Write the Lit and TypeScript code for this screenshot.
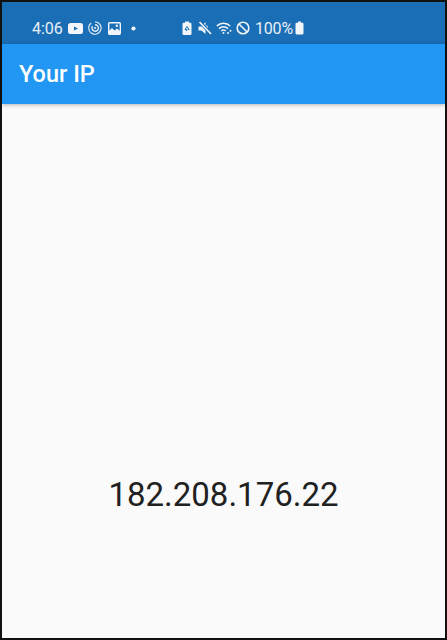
import { LitElement, html, css } from "lit";
import { customElement } from "lit/decorators.js";

@customElement("app-root")
export class AppRoot extends LitElement {
  static styles = css`
    :host {
      display: block;
      width: 447px;
      height: 640px;
      font-family: Roboto, "Liberation Sans", sans-serif;
    }
    .frame {
      box-sizing: border-box;
      width: 447px;
      height: 640px;
      border: 2px solid #111;
      background: #fafafa;
      display: flex;
      flex-direction: column;
    }
    .status {
      height: 42px;
      flex: none;
      background: #1a6eb5;
      color: #e8f0f8;
      display: flex;
      align-items: center;
      padding: 10px 0 0 30px;
      box-sizing: border-box;
      font-size: 16px;
    }
    .left, .right {
      display: flex;
      align-items: center;
    }
    .time { width: 36px; }
    svg { display: block; flex: none; }
    .right { margin-left: 46px; }
    .swirl { margin-left: 5px; }
    .image { margin-left: 6px; }
    .dot { margin-left: 10px; }
    .mute { margin-left: 6px; }
    .wifi { margin-left: 4px; }
    .block { margin-left: 4px; }
    .pct { margin-left: 5px; width: 40px; letter-spacing: -0.2px; }
    .appbar {
      height: 60px;
      flex: none;
      background: #2196f3;
      color: #fff;
      font-size: 23.5px;
      font-weight: 500;
      display: flex;
      align-items: center;
      padding: 0 0 0 17px;
      box-sizing: border-box;
      box-shadow: 0 1px 4px rgba(0, 0, 0, 0.28);
    }
    .body {
      flex: 1;
      display: flex;
      align-items: flex-end;
      justify-content: center;
      padding-bottom: 123px;
    }
    .ip {
      font-size: 33px;
      line-height: 40px;
      color: #212121;
    }
  `;

  render() {
    return html`
      <div class="frame">
        <div class="status">
          <div class="left">
            <span class="time">4:06</span>
            <svg width="15" height="11" viewBox="0 0 15 11">
              <rect width="15" height="11" rx="2.500" fill="#f2f6fa"/>
              <path d="M6 3.500v4L10 5.500z" fill="#1a6eb5"/>
            </svg>
            <svg class="swirl" width="14" height="14" viewBox="0 0 14 14" fill="none" stroke="#e8f0f8">
              <path d="M3.200 2A6.200 6.200 0 1 0 7 .8" stroke-width="1.100"/>
              <path d="M4.500 5.200A3.200 3.200 0 1 0 7 3.800" stroke-width="1.400"/>
              <circle cx="7" cy="7" r="1" fill="#e8f0f8" stroke="none"/>
            </svg>
            <svg class="image" width="13" height="13" viewBox="0 0 13 13">
              <rect x="0.700" y="0.700" width="11.600" height="11.600" rx="1" fill="none" stroke="#f2f6fa" stroke-width="1.400"/>
              <path d="M1 11.500V9l3-3 2.500 2.500L9 6.500l3 2.500v3H1z" fill="#f2f6fa"/>
              <circle cx="8.800" cy="3.800" r="1.200" fill="#f2f6fa"/>
            </svg>
            <svg class="dot" width="5" height="5" viewBox="0 0 5 5">
              <circle cx="2.500" cy="2.500" r="2.100" fill="#f2f6fa"/>
            </svg>
          </div>
          <div class="right">
            <svg width="10" height="14" viewBox="0 0 10 14">
              <path d="M3 0.500h4v1.300h1.200q1.300 0 1.300 1.300v9.600q0 1.300-1.300 1.300H1.800q-1.300 0-1.300-1.300V3.100q0-1.300 1.300-1.300H3z" fill="#f2f6fa"/>
              <path d="M5 5.500 3 8.500h1.500v1.500M5 5.500 7 8.500H5.500" fill="none" stroke="#1a6eb5" stroke-width="1"/>
            </svg>
            <svg class="mute" width="14" height="14" viewBox="0 0 14 14">
              <path d="M0.500 5.500h3L7.500 1v12L3.500 9.500h-3z" fill="#f2f6fa"/>
              <path d="M8.500 4.500q2 2.500 0 5" fill="none" stroke="#f2f6fa" stroke-width="1.200"/>
              <path d="M1.800 1l11.500 12" stroke="#1a6eb5" stroke-width="3.400"/>
              <path d="M1.500 1l11.500 12" stroke="#f2f6fa" stroke-width="1.700"/>
            </svg>
            <svg class="wifi" width="16" height="14" viewBox="0 0 16 14" fill="none" stroke="#f2f6fa" stroke-width="1.500">
              <path d="M0.800 5a9.500 9.500 0 0 1 13.400 0"/>
              <path d="M3 7.600a6.500 6.500 0 0 1 9 0"/>
              <path d="M5.300 10a3.300 3.300 0 0 1 4.400 0"/>
              <circle cx="7.500" cy="12" r="1" fill="#f2f6fa" stroke="none"/>
              <circle cx="14.500" cy="9.800" r="1" fill="#f2f6fa" stroke="none"/>
              <circle cx="12" cy="12" r="1" fill="#f2f6fa" stroke="none"/>
            </svg>
            <svg class="block" width="14" height="14" viewBox="0 0 14 14" fill="none" stroke="#f2f6fa" stroke-width="1.600">
              <circle cx="7" cy="7" r="5.800"/>
              <path d="M3 3l8 8"/>
            </svg>
            <span class="pct">100%</span>
            <svg width="9" height="14" viewBox="0 0 9 14">
              <path d="M3 0.500h3v1.200h1.200q1.300 0 1.300 1.300v9q0 1.500-1.300 1.500H1.800q-1.300 0-1.300-1.500V3q0-1.300 1.300-1.300H3z" fill="#f2f6fa"/>
            </svg>
          </div>
        </div>
        <div class="appbar">Your IP</div>
        <div class="body"><div class="ip">182.208.176.22</div></div>
      </div>
    `;
  }
}
